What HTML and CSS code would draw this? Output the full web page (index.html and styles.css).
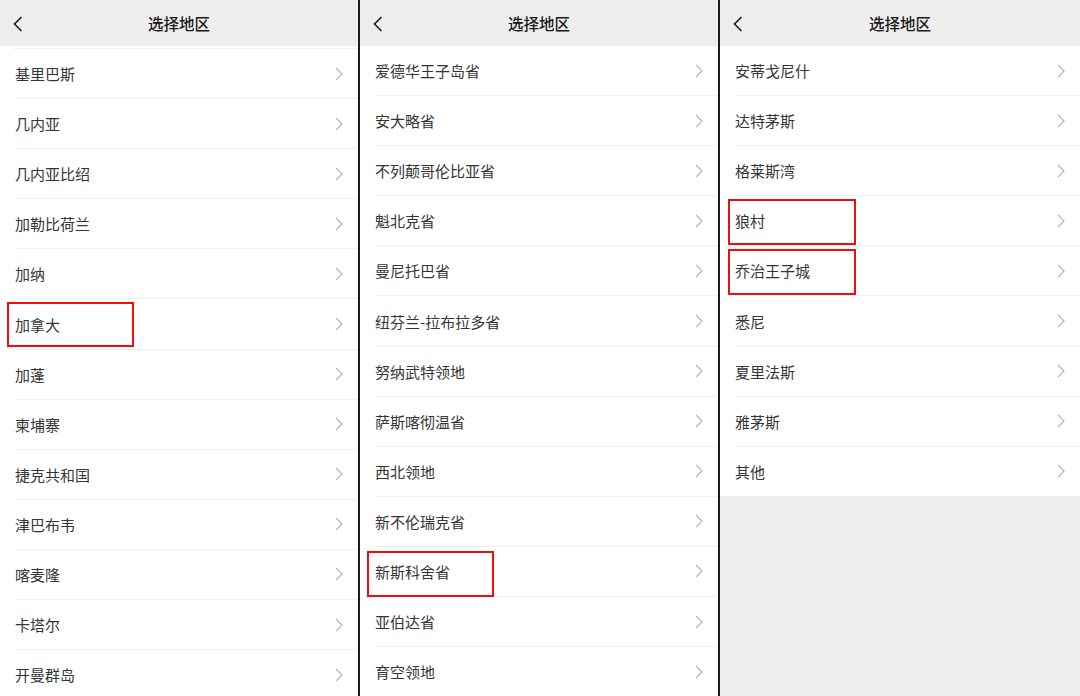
FILE: index.html
```html
<!DOCTYPE html>
<html lang="zh-CN">
<head>
  <meta charset="UTF-8" />
  <title>选择地区</title>
  <link rel="stylesheet" href="styles.css">
</head>
<body>
  <div id="screens">

    <div class="screen">
      <div class="header">
        <svg class="back" width="10" height="16" viewBox="0 0 10 16"><path d="M8.5 1 L1.5 8 L8.5 15" /></svg>
        <span class="title">选择地区</span>
      </div>
      <ul class="list">
        <li class="sliver"></li>
        <li class="row">基里巴斯<svg class="arrow" width="8" height="14" viewBox="0 0 8 14"><path d="M1 1 L7 7 L1 13" /></svg></li>
        <li class="row">几内亚<svg class="arrow" width="8" height="14" viewBox="0 0 8 14"><path d="M1 1 L7 7 L1 13" /></svg></li>
        <li class="row">几内亚比绍<svg class="arrow" width="8" height="14" viewBox="0 0 8 14"><path d="M1 1 L7 7 L1 13" /></svg></li>
        <li class="row">加勒比荷兰<svg class="arrow" width="8" height="14" viewBox="0 0 8 14"><path d="M1 1 L7 7 L1 13" /></svg></li>
        <li class="row">加纳<svg class="arrow" width="8" height="14" viewBox="0 0 8 14"><path d="M1 1 L7 7 L1 13" /></svg></li>
        <li class="row">加拿大<span class="mark m1"></span><svg class="arrow" width="8" height="14" viewBox="0 0 8 14"><path d="M1 1 L7 7 L1 13" /></svg></li>
        <li class="row">加蓬<svg class="arrow" width="8" height="14" viewBox="0 0 8 14"><path d="M1 1 L7 7 L1 13" /></svg></li>
        <li class="row">柬埔寨<svg class="arrow" width="8" height="14" viewBox="0 0 8 14"><path d="M1 1 L7 7 L1 13" /></svg></li>
        <li class="row">捷克共和国<svg class="arrow" width="8" height="14" viewBox="0 0 8 14"><path d="M1 1 L7 7 L1 13" /></svg></li>
        <li class="row">津巴布韦<svg class="arrow" width="8" height="14" viewBox="0 0 8 14"><path d="M1 1 L7 7 L1 13" /></svg></li>
        <li class="row">喀麦隆<svg class="arrow" width="8" height="14" viewBox="0 0 8 14"><path d="M1 1 L7 7 L1 13" /></svg></li>
        <li class="row">卡塔尔<svg class="arrow" width="8" height="14" viewBox="0 0 8 14"><path d="M1 1 L7 7 L1 13" /></svg></li>
        <li class="row">开曼群岛<svg class="arrow" width="8" height="14" viewBox="0 0 8 14"><path d="M1 1 L7 7 L1 13" /></svg></li>
      </ul>
    </div>

    <div class="screen">
      <div class="header">
        <svg class="back" width="10" height="16" viewBox="0 0 10 16"><path d="M8.5 1 L1.5 8 L8.5 15" /></svg>
        <span class="title">选择地区</span>
      </div>
      <ul class="list">
        <li class="row">爱德华王子岛省<svg class="arrow" width="8" height="14" viewBox="0 0 8 14"><path d="M1 1 L7 7 L1 13" /></svg></li>
        <li class="row">安大略省<svg class="arrow" width="8" height="14" viewBox="0 0 8 14"><path d="M1 1 L7 7 L1 13" /></svg></li>
        <li class="row">不列颠哥伦比亚省<svg class="arrow" width="8" height="14" viewBox="0 0 8 14"><path d="M1 1 L7 7 L1 13" /></svg></li>
        <li class="row">魁北克省<svg class="arrow" width="8" height="14" viewBox="0 0 8 14"><path d="M1 1 L7 7 L1 13" /></svg></li>
        <li class="row">曼尼托巴省<svg class="arrow" width="8" height="14" viewBox="0 0 8 14"><path d="M1 1 L7 7 L1 13" /></svg></li>
        <li class="row">纽芬兰-拉布拉多省<svg class="arrow" width="8" height="14" viewBox="0 0 8 14"><path d="M1 1 L7 7 L1 13" /></svg></li>
        <li class="row">努纳武特领地<svg class="arrow" width="8" height="14" viewBox="0 0 8 14"><path d="M1 1 L7 7 L1 13" /></svg></li>
        <li class="row">萨斯喀彻温省<svg class="arrow" width="8" height="14" viewBox="0 0 8 14"><path d="M1 1 L7 7 L1 13" /></svg></li>
        <li class="row">西北领地<svg class="arrow" width="8" height="14" viewBox="0 0 8 14"><path d="M1 1 L7 7 L1 13" /></svg></li>
        <li class="row">新不伦瑞克省<svg class="arrow" width="8" height="14" viewBox="0 0 8 14"><path d="M1 1 L7 7 L1 13" /></svg></li>
        <li class="row">新斯科舍省<span class="mark m2"></span><svg class="arrow" width="8" height="14" viewBox="0 0 8 14"><path d="M1 1 L7 7 L1 13" /></svg></li>
        <li class="row">亚伯达省<svg class="arrow" width="8" height="14" viewBox="0 0 8 14"><path d="M1 1 L7 7 L1 13" /></svg></li>
        <li class="row">育空领地<svg class="arrow" width="8" height="14" viewBox="0 0 8 14"><path d="M1 1 L7 7 L1 13" /></svg></li>
      </ul>
    </div>

    <div class="screen last">
      <div class="header">
        <svg class="back" width="10" height="16" viewBox="0 0 10 16"><path d="M8.5 1 L1.5 8 L8.5 15" /></svg>
        <span class="title">选择地区</span>
      </div>
      <ul class="list">
        <li class="row">安蒂戈尼什<svg class="arrow" width="8" height="14" viewBox="0 0 8 14"><path d="M1 1 L7 7 L1 13" /></svg></li>
        <li class="row">达特茅斯<svg class="arrow" width="8" height="14" viewBox="0 0 8 14"><path d="M1 1 L7 7 L1 13" /></svg></li>
        <li class="row">格莱斯湾<svg class="arrow" width="8" height="14" viewBox="0 0 8 14"><path d="M1 1 L7 7 L1 13" /></svg></li>
        <li class="row">狼村<span class="mark m3"></span><svg class="arrow" width="8" height="14" viewBox="0 0 8 14"><path d="M1 1 L7 7 L1 13" /></svg></li>
        <li class="row">乔治王子城<span class="mark m3"></span><svg class="arrow" width="8" height="14" viewBox="0 0 8 14"><path d="M1 1 L7 7 L1 13" /></svg></li>
        <li class="row">悉尼<svg class="arrow" width="8" height="14" viewBox="0 0 8 14"><path d="M1 1 L7 7 L1 13" /></svg></li>
        <li class="row">夏里法斯<svg class="arrow" width="8" height="14" viewBox="0 0 8 14"><path d="M1 1 L7 7 L1 13" /></svg></li>
        <li class="row">雅茅斯<svg class="arrow" width="8" height="14" viewBox="0 0 8 14"><path d="M1 1 L7 7 L1 13" /></svg></li>
        <li class="row">其他<svg class="arrow" width="8" height="14" viewBox="0 0 8 14"><path d="M1 1 L7 7 L1 13" /></svg></li>
      </ul>
    </div>

  </div>
</body>
</html>
```

FILE: styles.css
```css
body {
  margin: 0;
  padding: 0;
  font-family: "Noto Sans CJK SC", "Noto Sans", sans-serif;
  background-color: #fff;
  overflow: hidden;
}

#screens {
  display: flex;
  height: 696px;
  width: 1080px;
}

.screen {
  width: 358px;
  height: 696px;
  border-right: 2px solid #1c1c1c;
  background-color: #fff;
  overflow: hidden;
  display: flex;
  flex-direction: column;
}

.screen.last {
  flex: 1;
  border-right: none;
  background-color: #ededed;
}

.header {
  height: 46px;
  flex-shrink: 0;
  background-color: #ededed;
  display: flex;
  align-items: center;
  justify-content: center;
  position: relative;
}

.back {
  position: absolute;
  left: 13px;
  top: 16px;
}

.back path {
  fill: none;
  stroke: #1a1a1a;
  stroke-width: 1.6;
}

.title {
  font-size: 15.5px;
  font-weight: 500;
  color: #1a1a1a;
}

.list {
  list-style: none;
  margin: 0;
  padding: 0;
  background-color: #fff;
}

.sliver {
  height: 2px;
  margin-left: 14px;
  border-bottom: 1px solid #f0f0f0;
}

.row {
  position: relative;
  height: 49.1px;
  margin-left: 15px;
  padding-right: 15px;
  border-bottom: 1px solid #f0f0f0;
  display: flex;
  align-items: center;
  justify-content: space-between;
  font-size: 15px;
  color: #353535;
}

.row:last-child {
  border-bottom: none;
}

.arrow path {
  fill: none;
  stroke: #b5b5b5;
  stroke-width: 1.2;
}

.mark {
  position: absolute;
  border: 2px solid #f20d0d;
}

.m1 {
  left: -8px;
  top: 3px;
  width: 123px;
  height: 41px;
}

.m2 {
  left: -8px;
  top: 4px;
  width: 123px;
  height: 42px;
}

.m3 {
  left: -7px;
  top: 3px;
  width: 124px;
  height: 42px;
}
```
